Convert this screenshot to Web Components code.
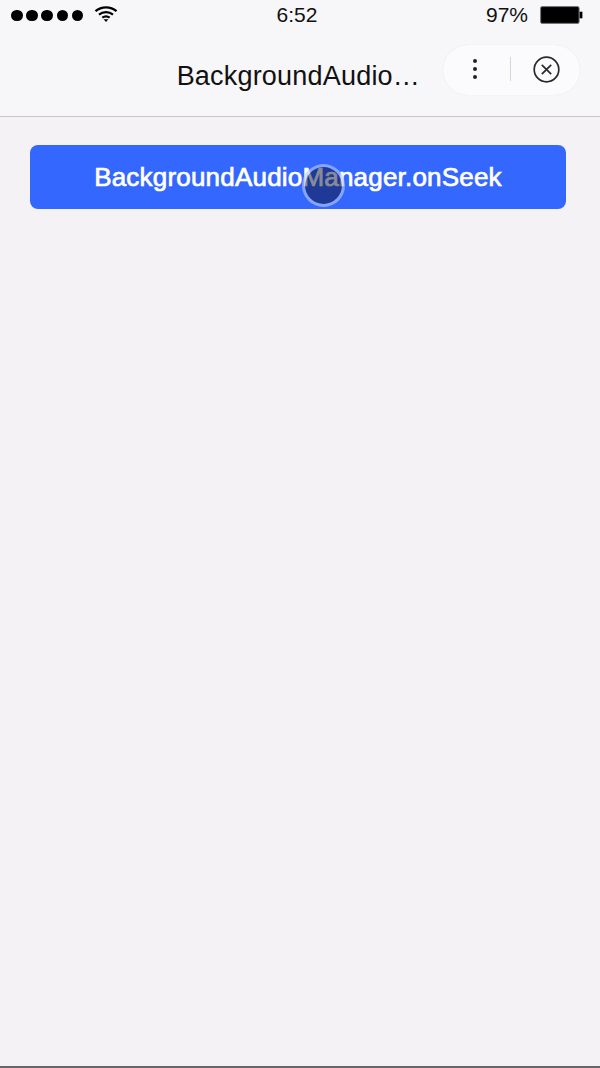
<!DOCTYPE html>
<html><head><meta charset="utf-8"><style>
html,body{margin:0;padding:0;height:100%;}
body{width:600px;height:1068px;background:#f4f2f5;font-family:"Liberation Sans",sans-serif;overflow:hidden;}
app-shell{height:1068px;}
</style></head><body>
<app-shell>
<nav-header title-text="BackgroundAudio…"></nav-header>
<page-body><action-button>BackgroundAudioManager.onSeek</action-button></page-body>
</app-shell>
<script>
function def(name,html){customElements.define(name,class extends HTMLElement{constructor(){super();this.attachShadow({mode:'open'}).innerHTML=html;}});}
def('app-shell',`<style>:host{display:flex;flex-direction:column;box-sizing:border-box;border-bottom:2px solid #666;}</style><slot></slot>`);
def('status-bar',`<style>:host{display:grid;grid-template-columns:1fr auto 1fr;align-items:center;height:30px;color:#111;font-size:21px;padding:0 17px 0 11px;box-sizing:border-box}
.l{display:flex;align-items:center;gap:3.7px}.d{width:11.5px;height:11.5px;border-radius:50%;background:#000;margin-top:1px}
.r{display:flex;justify-content:flex-end;align-items:center;gap:12px}svg{display:block}
</style>
<div class="l"><i class="d"></i><i class="d"></i><i class="d"></i><i class="d"></i><i class="d"></i>
<svg style="margin-left:7px;margin-top:-2px" width="24" height="18" viewBox="0 0 24 18" fill="none" stroke="#000" stroke-width="2.2"><path d="M1.5 6.2C7.5 1 16.5 1 22.5 6.2"/><path d="M5 9.6C9 6.3 15 6.3 19 9.6"/><path d="M8.3 12.6C10.5 11 13.5 11 15.7 12.6"/><path d="M9.6 14.2h4.8L12 17z" fill="#000" stroke="none"/></svg></div>
<div>6:52</div>
<div class="r"><span>97%</span><svg width="43" height="20" viewBox="0 0 43 20"><rect x="0.6" y="1.6" width="38.5" height="16.8" rx="1.5" fill="#000" stroke="#777" stroke-width="1"/><rect x="39.6" y="6.7" width="2.8" height="6.6" fill="#000"/></svg></div>`);
def('capsule-menu',`<style>:host{display:flex;align-items:center;width:137px;height:50px;background:#fbfafc;border-radius:25px;box-shadow:0 0 1px #dcdbe0;box-sizing:border-box;padding-bottom:2px}
.m{flex:1 1 0;display:flex;justify-content:center}.a{flex:0 0 64px;margin-right:3px}.c{padding-left:1px}.s{width:1.4px;height:24px;background:#d6d5d8}svg{display:block}</style>
<div class="m a"><svg width="6" height="22" viewBox="0 0 6 22" fill="#222"><circle cx="3" cy="3" r="2"/><circle cx="3" cy="11" r="2"/><circle cx="3" cy="19" r="2"/></svg></div>
<div class="s"></div>
<div class="m c"><svg width="27" height="27" viewBox="0 0 27 27" fill="none" stroke="#2a2a2a" stroke-width="1.7"><circle cx="13.5" cy="13.5" r="12.3"/><path d="M8.8 8.8L18.2 18.2M18.2 8.8L8.8 18.2"/></svg></div>`);
customElements.define('nav-header',class extends HTMLElement{constructor(){super();const s=this.attachShadow({mode:'open'});s.innerHTML=`<style>:host{display:block;height:117px;box-sizing:border-box;background:#f7f6f9;border-bottom:1px solid #c6c5c8}
.n{display:flex;align-items:flex-start;justify-content:flex-end;padding:15px 20px 0 0;gap:23px;font-size:27px;letter-spacing:.2px;color:#111}
.t{white-space:nowrap;line-height:36px;margin-top:13px}</style><status-bar></status-bar><div class="n"><span class="t"></span><capsule-menu></capsule-menu></div>`;}
connectedCallback(){this.shadowRoot.querySelector('.t').textContent=this.getAttribute('title-text');}});
def('page-body',`<style>:host{display:block;flex:1;padding:28px 34px 0 30px}</style><slot></slot>`);
def('action-button',`<style>:host{display:block;position:relative;height:64px;line-height:64px;background:#3467fd;border-radius:8px;color:#fff;text-align:center;font-size:26px;font-weight:400;letter-spacing:.2px;-webkit-text-stroke:.7px #fff}
.touch{position:absolute;left:272px;top:19px;width:43px;height:43px;box-sizing:border-box;border-radius:50%;background:rgba(7,7,34,.47);border:3px solid rgba(190,205,250,.6);background-clip:padding-box;filter:blur(.4px)}</style><slot></slot><div class="touch"></div>`);
</script>
</body></html>
